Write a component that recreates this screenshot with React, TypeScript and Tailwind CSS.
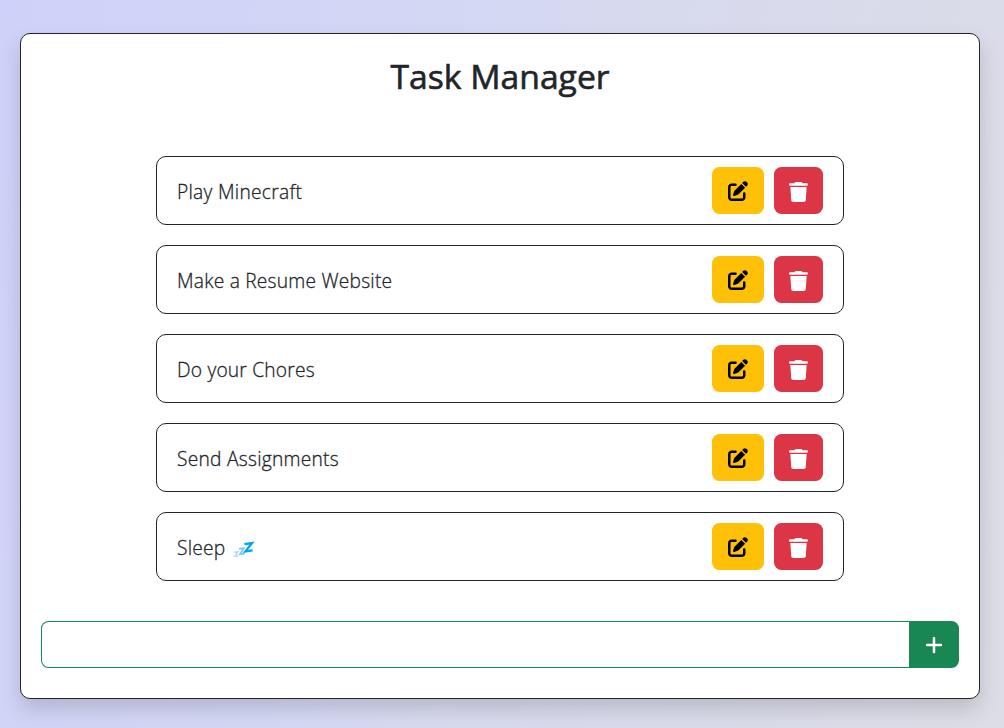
import { FaPenToSquare, FaPlus, FaTrash } from "react-icons/fa6";

function SleepIcon() {
  return (
    <svg width="22" height="17" viewBox="0 0 22 17" fill="none" role="img" aria-label="Sleeping" className="mt-[5px] ml-2">
      <path d="M1.4 11.3L5 10.8L2 15.2L5.4 14.9" stroke="#a6d8f8" strokeWidth="1.4" />
      <path d="M6 7.9L10.8 7.2L7 13.2L11.6 12.7" stroke="#7cc6f5" strokeWidth="1.7" />
      <path d="M11.4 3.2L19 2L12.4 10.4L19.6 9.4" stroke="#00a4ef" strokeWidth="2.3" />
    </svg>
  );
}

const tasks = [
  { title: "Play Minecraft", text: "w-[125px] tracking-[0.28px]" },
  { title: "Make a Resume Website", text: "w-[215px] tracking-[0.22px]" },
  { title: "Do your Chores", text: "w-[138px] tracking-[0.2px]" },
  { title: "Send Assignments", text: "w-[162px] tracking-[0.25px]" },
  { title: "Sleep", text: "w-[48px] tracking-[0.2px]", sleepy: true },
];

function TaskRow({ title, text, sleepy }: { title: string; text: string; sleepy?: boolean }) {
  return (
    <li className="flex h-[69px] items-center rounded-[10px] border border-[#212529] px-5">
      <span className={`${text} whitespace-nowrap pt-[3px] text-[19.2px] font-light leading-[30px] [-webkit-text-stroke:0.3px_#212529]`}>{title}</span>
      {sleepy && <SleepIcon />}
      <div className="ml-auto flex gap-2.5">
        <button aria-label="Edit" className="flex h-[47px] w-[52px] items-center justify-center rounded-[7.5px] bg-[#ffc107] pt-px pr-px text-black">
          <FaPenToSquare size={20} />
        </button>
        <button aria-label="Delete" className="flex h-[47px] w-[49px] items-center justify-center rounded-[7.5px] bg-[#dc3545] pt-0.5 text-white">
          <FaTrash className="h-5 w-[19px]" preserveAspectRatio="none" />
        </button>
      </div>
    </li>
  );
}

export default function App() {
  return (
    <div className="h-[728px] w-[1004px] overflow-hidden bg-[linear-gradient(105deg,#d0d1fa_0%,#d4d8f3_42%,#d7d9ee_52%,#dddde6_100%)] px-5 pt-[33px] font-['Open_Sans','Noto_Sans',sans-serif] text-[#212529]">
      <main className="flex h-[666px] w-[960px] flex-col rounded-[10px] border border-[#212529] bg-white px-5 shadow-[0_10px_20px_rgba(0,0,0,0.15)]">
        <h1 className="mt-[21px] text-center text-[33.7px] font-normal leading-[42px] [-webkit-text-stroke:0.6px_#212529]">Task Manager</h1>
        <ul className="mx-auto mt-[59px] flex w-[688px] flex-col gap-5">
          {tasks.map((task) => (
            <TaskRow key={task.title} {...task} />
          ))}
        </ul>
        <form className="mt-10 flex h-[47px]" onSubmit={(e) => e.preventDefault()}>
          <input aria-label="New task" className="min-w-0 flex-1 rounded-l-[7.5px] border border-r-0 border-[#198754] px-4 text-xl outline-none" />
          <button aria-label="Add" className="flex w-[50px] items-center justify-center rounded-r-[7.5px] bg-[#198754] pt-px text-white">
            <FaPlus size={20} />
          </button>
        </form>
      </main>
    </div>
  );
}
